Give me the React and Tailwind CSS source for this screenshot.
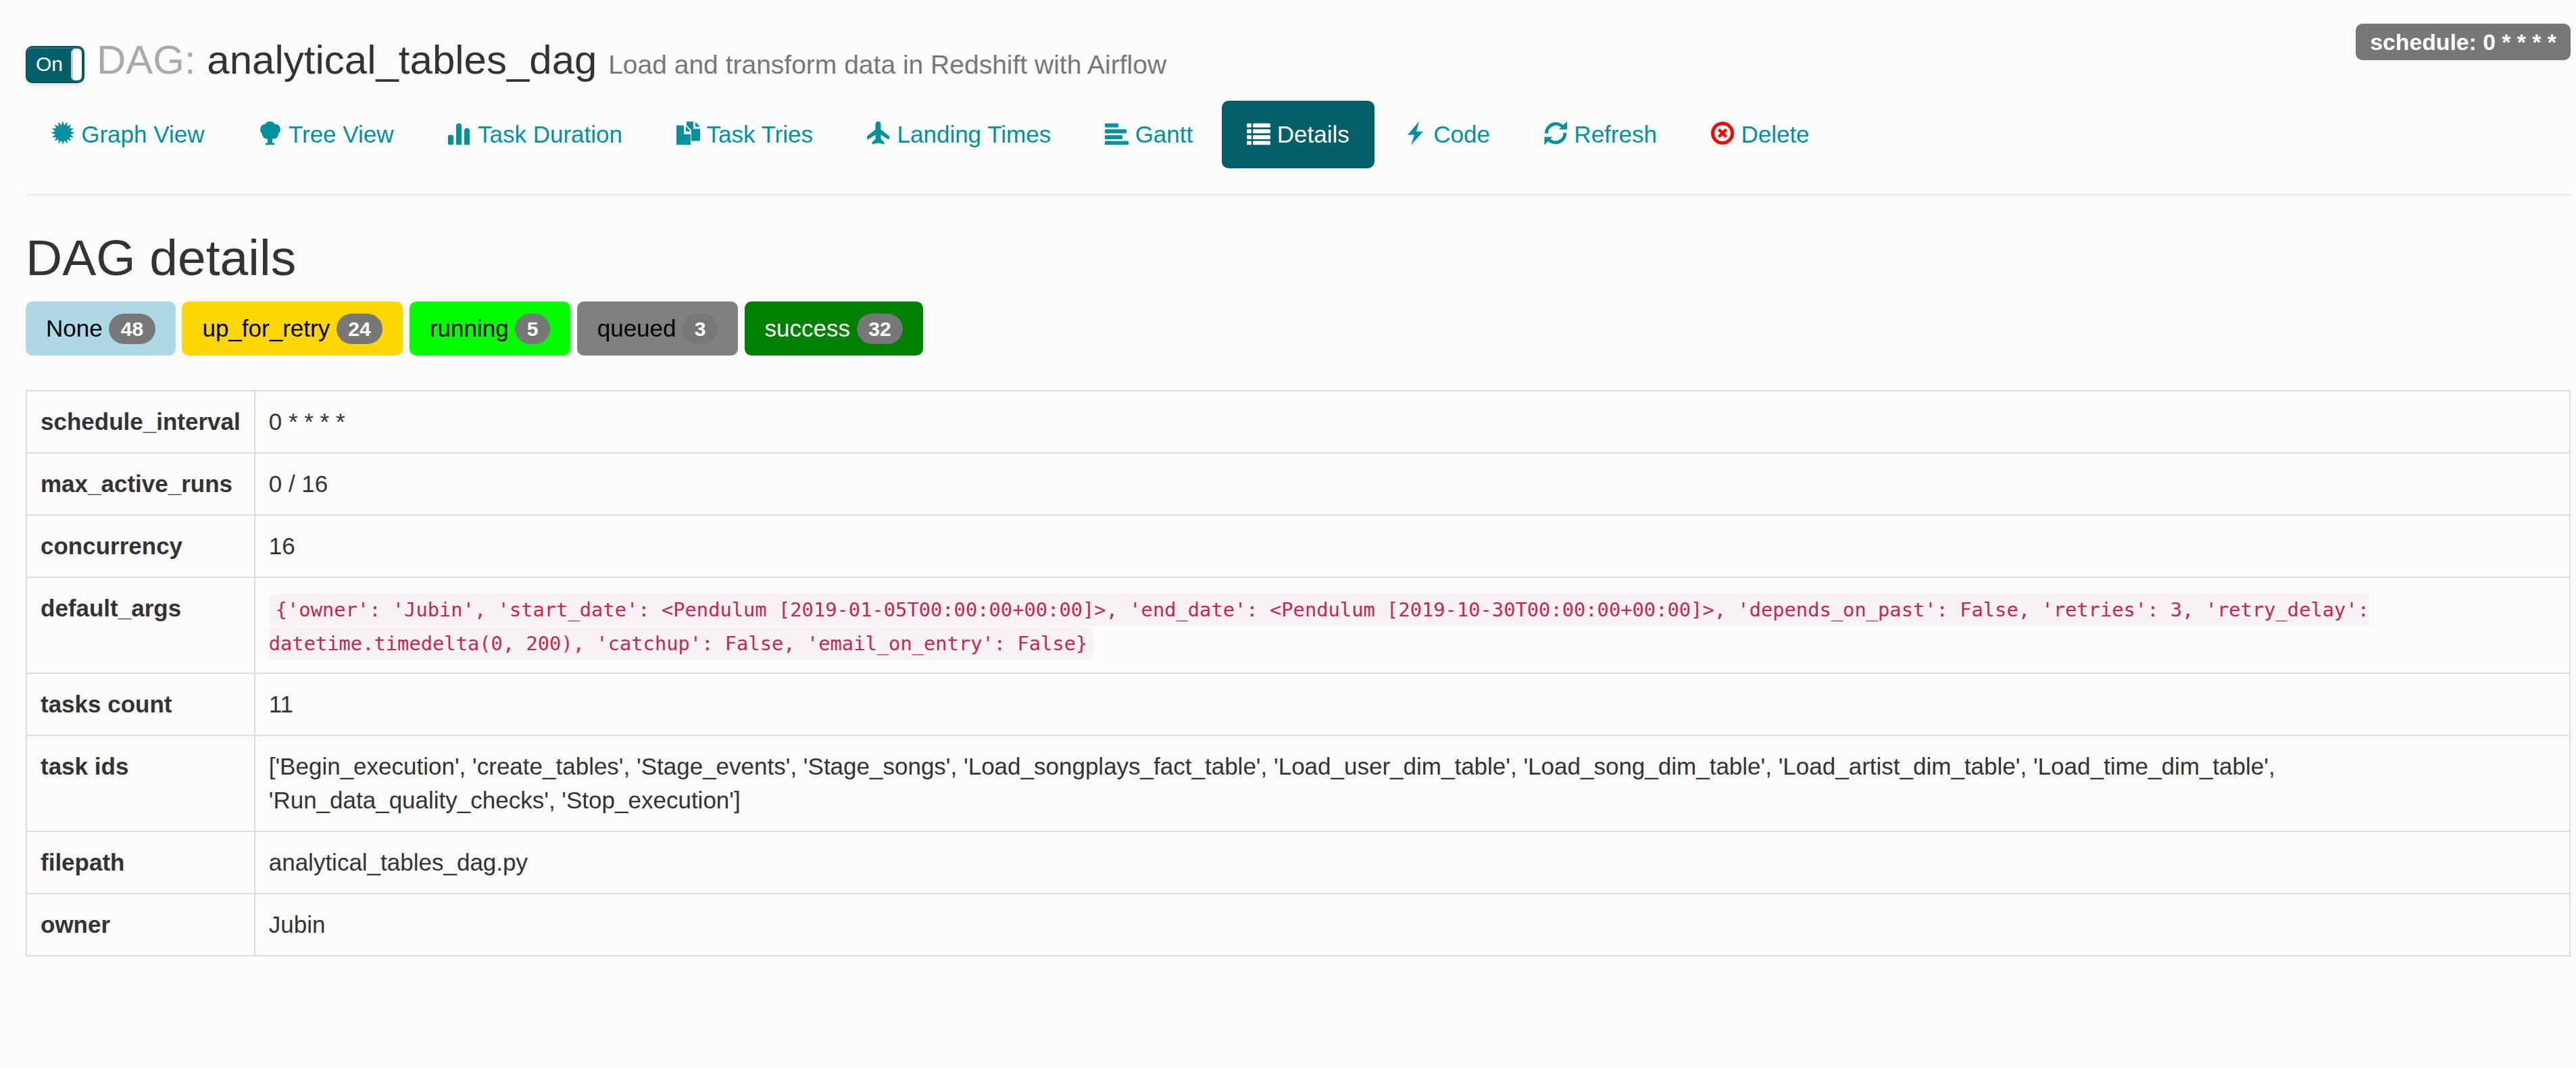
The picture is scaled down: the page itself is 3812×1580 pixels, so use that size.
import React from "react";

const starPoints = () => {
  const points = [];
  for (let i = 0; i < 32; i++) {
    const radius = i % 2 === 0 ? 17.5 : 11.5;
    const angle = (Math.PI * i) / 16 - Math.PI / 2;
    points.push(`${17 + radius * Math.cos(angle)},${17 + radius * Math.sin(angle)}`);
  }
  return points.join(" ");
};

const icons = {
  certificate: <polygon points={starPoints()} />,
  tree: (
    <>
      <circle cx="17.5" cy="8" r="8" />
      <circle cx="11" cy="12" r="8" />
      <circle cx="25" cy="12" r="8" />
      <circle cx="13" cy="19" r="7" />
      <circle cx="23" cy="19" r="7" />
      <path d="M14 20h7v12h3v3h-13v-3h3z" />
    </>
  ),
  stats: (
    <>
      <rect x="1" y="20" width="8" height="15" rx="2.5" />
      <path d="M13 7a4 4 0 0 1 8 0v28h-8z" />
      <path d="M25 14a4 4 0 0 1 8 0v21h-8z" />
    </>
  ),
  duplicate: (
    <>
      <path d="M15 0H25V11H35V29H22V13L15 6Z" />
      <path d="M28 1L35 8H28Z" />
      <path d="M0 6H11V19H21V35H0Z" />
      <path d="M14 7L21 15H14Z" />
    </>
  ),
  plane: (
    <path d="M16.5 0C19 0 20.5 2 20.5 5V12L33 22V25L32 27L20.5 20V26L25.5 31V34L16.5 32L7.5 34V31L12.5 26V20L1 27L0 25V22L12.5 12V5C12.5 2 14 0 16.5 0Z" />
  ),
  alignLeft: (
    <>
      <rect x="0" y="3" width="20" height="6" rx="1.5" />
      <rect x="0" y="11.7" width="32" height="6" rx="1.5" />
      <rect x="0" y="20.4" width="26" height="6" rx="1.5" />
      <rect x="0" y="29" width="35" height="6" rx="1.5" />
    </>
  ),
  list: (
    <>
      <rect x="0" y="3" width="7" height="6" rx="1.5" />
      <rect x="9" y="3" width="26" height="6" rx="1.5" />
      <rect x="0" y="11.7" width="7" height="6" rx="1.5" />
      <rect x="9" y="11.7" width="26" height="6" rx="1.5" />
      <rect x="0" y="20.4" width="7" height="6" rx="1.5" />
      <rect x="9" y="20.4" width="26" height="6" rx="1.5" />
      <rect x="0" y="29" width="7" height="6" rx="1.5" />
      <rect x="9" y="29" width="26" height="6" rx="1.5" />
    </>
  ),
  flash: <polygon points="23,0 6,20 16,20 11,35 29,15 19,15" />,
  refresh: (
    <>
      <path d="M3.5 18A14 14 0 0 1 28 8.5" fill="none" stroke="currentColor" strokeWidth="5" />
      <path d="M34 0V12H22Z" />
      <path d="M31 17A14 14 0 0 1 6.5 26.5" fill="none" stroke="currentColor" strokeWidth="5" />
      <path d="M0.5 35V23H12.5Z" />
    </>
  ),
  remove: (
    <>
      <circle cx="17" cy="17.5" r="14.5" fill="none" stroke="#ff0000" strokeWidth="5" />
      <path d="M11.5 12L22.5 23M22.5 12L11.5 23" fill="none" stroke="#ff0000" strokeWidth="4.5" />
    </>
  ),
};

function Icon({ name }) {
  return (
    <svg viewBox="0 0 35 35" fill="currentColor" className="mr-[9.7px] h-[35px] w-[35px] shrink-0 -translate-y-[2.5px]">
      {icons[name]}
    </svg>
  );
}

const tabs = [
  { label: "Graph View", icon: "certificate" },
  { label: "Tree View", icon: "tree" },
  { label: "Task Duration", icon: "stats" },
  { label: "Task Tries", icon: "duplicate" },
  { label: "Landing Times", icon: "plane" },
  { label: "Gantt", icon: "alignLeft" },
  { label: "Details", icon: "list", active: true },
  { label: "Code", icon: "flash" },
  { label: "Refresh", icon: "refresh" },
  { label: "Delete", icon: "remove" },
];

const states = [
  { label: "None", count: 48, className: "bg-[#add8e6] text-black" },
  { label: "up_for_retry", count: 24, className: "bg-[#ffd700] text-black" },
  { label: "running", count: 5, className: "bg-[#00ff00] text-black" },
  { label: "queued", count: 3, className: "bg-[#808080] text-black" },
  { label: "success", count: 32, className: "bg-[#008000] text-white" },
];

const defaultArgs =
  "{'owner': 'Jubin', 'start_date': <Pendulum [2019-01-05T00:00:00+00:00]>, 'end_date': <Pendulum [2019-10-30T00:00:00+00:00]>, 'depends_on_past': False, 'retries': 3, 'retry_delay': datetime.timedelta(0, 200), 'catchup': False, 'email_on_entry': False}";

const rows = [
  ["schedule_interval", "0 * * * *"],
  ["max_active_runs", "0 / 16"],
  ["concurrency", "16"],
  [
    "default_args",
    <code className="rounded-[10px] bg-[#f9f2f4] px-[10px] py-[7px] font-['DejaVu_Sans_Mono',monospace] text-[28.75px] leading-[40px] text-[#c7254e]">
      {defaultArgs}
    </code>,
  ],
  ["tasks count", "11"],
  [
    "task ids",
    "['Begin_execution', 'create_tables', 'Stage_events', 'Stage_songs', 'Load_songplays_fact_table', 'Load_user_dim_table', 'Load_song_dim_table', 'Load_artist_dim_table', 'Load_time_dim_table', 'Run_data_quality_checks', 'Stop_execution']",
  ],
  ["filepath", "analytical_tables_dag.py"],
  ["owner", "Jubin"],
];

export default function App() {
  return (
    <div className="min-h-screen bg-[#fbfbfb] pt-[35px] pr-[8px] pl-[38px] font-['Liberation_Sans',Arial,sans-serif] text-[35px] leading-[50px] text-[#333333]">
      <div className="flex h-[114px] items-start justify-between">
        <div className="mt-[33px] flex items-start">
          <div className="relative h-[55px] w-[87px] rounded-[10px] border-2 border-[#02525a] bg-[#005f68] shadow-[0_3px_6px_rgba(0,0,0,0.12),inset_0_2px_0_rgba(255,255,255,0.15)]">
            <span className="absolute top-0 left-[13px] text-[30px] leading-[50px] text-white">On</span>
            <span className="absolute top-[2px] right-[2px] bottom-[2px] w-[16px] rounded-[6px] border-l-[3px] border-[#cccccc] bg-white" />
          </div>
          <h4 className="ml-[18px] -mt-[12px] whitespace-nowrap text-[60px] leading-[66px] font-normal">
            <span className="text-[#aaaaaa]">DAG: </span>
            analytical_tables_dag <small className="text-[39px] text-[#777777]">Load and transform data in Redshift with Airflow</small>
          </h4>
        </div>
        <span className="rounded-[10px] bg-[#777777] px-[21px] text-[33.75px] leading-[54px] font-bold text-white">
          schedule: 0 * * * *
        </span>
      </div>

      <ul className="flex">
        {tabs.map((tab) => (
          <li key={tab.label} className="mr-[4.8px]">
            <a
              className={`flex h-[100px] items-center rounded-[10px] px-[37.5px] ${
                tab.active ? "bg-[#005f68] text-white" : "text-[#00919f]"
              }`}
            >
              <Icon name={tab.icon} />
              {tab.label}
            </a>
          </li>
        ))}
      </ul>

      <hr className="mt-[38px] h-[2.5px] border-0 bg-[#eeeeee]" />

      <h2 className="mt-[50px] text-[75px] leading-[82.5px] font-normal">DAG details</h2>

      <div className="mt-[24px] flex gap-[9.7px]">
        {states.map((state) => (
          <div key={state.label} className={`flex h-[80px] items-center rounded-[10px] px-[30px] ${state.className}`}>
            {state.label}
            <span className="ml-[9.7px] rounded-[25px] bg-[#777777] px-[17.5px] text-[30px] leading-[45px] font-bold text-white">
              {state.count}
            </span>
          </div>
        ))}
      </div>

      <table className="mt-[51px] w-full border-collapse border-2 border-[#dddddd]">
        <tbody>
          {rows.map(([name, value]) => (
            <tr key={name}>
              <th className="border-2 border-[#dddddd] p-[20px] text-left align-top font-bold whitespace-nowrap">{name}</th>
              <td className="w-full border-2 border-[#dddddd] p-[20px] align-top">{value}</td>
            </tr>
          ))}
        </tbody>
      </table>
    </div>
  );
}
